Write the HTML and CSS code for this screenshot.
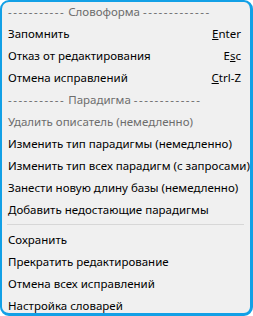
FILE: index.html
```html
<html>
<head>
<meta charset="UTF-8">
<link rel="stylesheet" href="styles.css">
</head>
<body>
<div class="menu">
<div class="item header"><span class="dash">-----------</span> Словоформа <span class="dash">-------------</span></div>
<div class="item"><span>Запомнить</span><span class="key"><u>E</u>nter</span></div>
<div class="item"><span>Отказ от редактирования</span><span class="key">E<u>s</u>c</span></div>
<div class="item"><span>Отмена исправлений</span><span class="key"><u>C</u>trl-Z</span></div>
<div class="item header"><span class="dash">-----------</span> Парадигма <span class="dash">-------------</span></div>
<div class="item disabled">Удалить описатель (немедленно)</div>
<div class="item">Изменить тип парадигмы (немедленно)</div>
<div class="item">Изменить тип всех парадигм (с запросами)</div>
<div class="item">Занести новую длину базы (немедленно)</div>
<div class="item">Добавить недостающие парадигмы</div>
<div class="sep"></div>
<div class="item">Сохранить</div>
<div class="item">Прекратить редактирование</div>
<div class="item">Отмена всех исправлений</div>
<div class="item">Настройка словарей</div>
</div>
</body>
</html>
```
FILE: styles.css
```css
*{
margin:0;
padding:0;
}
body{
background:#fff;
width:253px;
height:316px;
}
.menu{
box-sizing:border-box;
width:253px;
height:316px;
background:#f0f0f0;
border:2px solid #12a0e6;
border-right-width:3px;
border-bottom-width:3px;
border-radius:9px;
font-family:"Noto Sans","DejaVu Sans",sans-serif;
font-size:11.5px;
color:#000;
padding-left:6px;
padding-right:9px;
}
.item{
height:22px;
line-height:22px;
display:flex;
justify-content:space-between;
white-space:nowrap;
}
.item:first-child{
height:21px;
line-height:20px;
}
.header{
justify-content:flex-start;
white-space:pre;
}
.dash{
letter-spacing:1.5px;
}
.header,.disabled{
color:#6d6d6d;
}
.key u{
text-decoration:underline;
}
.sep{
height:8px;
margin:0 -3px 0 -1px;
background:linear-gradient(#f0f0f0 3px,#d7d7d7 3px,#d7d7d7 4px,#f0f0f0 4px);
}
```
